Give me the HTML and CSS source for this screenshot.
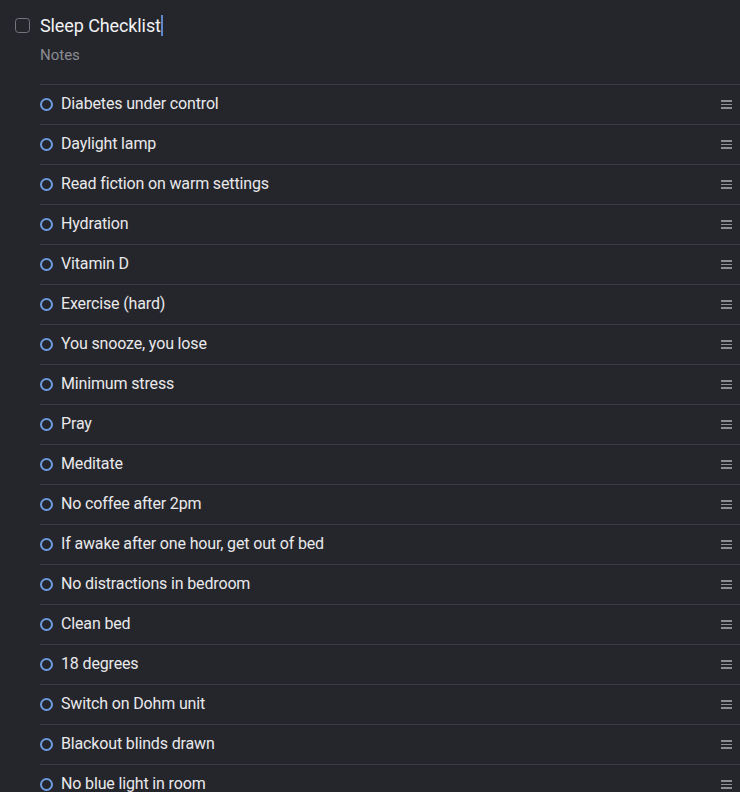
FILE: index.html
```html
<!DOCTYPE html>
<html>
<head>
<meta charset="utf-8">
<link rel="stylesheet" href="styles.css">
</head>
<body>
<div class="page">
  <div class="header">
    <span class="checkbox"></span>
    <span class="title">Sleep Checklist</span><span class="cursor"></span>
  </div>
  <div class="notes">Notes</div>
  <ul class="list">
    <li class="row"><span class="dot"></span><span class="label">Diabetes under control</span><span class="handle"><i></i><i></i><i></i></span></li>
    <li class="row"><span class="dot"></span><span class="label">Daylight lamp</span><span class="handle"><i></i><i></i><i></i></span></li>
    <li class="row"><span class="dot"></span><span class="label">Read fiction on warm settings</span><span class="handle"><i></i><i></i><i></i></span></li>
    <li class="row"><span class="dot"></span><span class="label">Hydration</span><span class="handle"><i></i><i></i><i></i></span></li>
    <li class="row"><span class="dot"></span><span class="label">Vitamin D</span><span class="handle"><i></i><i></i><i></i></span></li>
    <li class="row"><span class="dot"></span><span class="label">Exercise (hard)</span><span class="handle"><i></i><i></i><i></i></span></li>
    <li class="row"><span class="dot"></span><span class="label">You snooze, you lose</span><span class="handle"><i></i><i></i><i></i></span></li>
    <li class="row"><span class="dot"></span><span class="label">Minimum stress</span><span class="handle"><i></i><i></i><i></i></span></li>
    <li class="row"><span class="dot"></span><span class="label">Pray</span><span class="handle"><i></i><i></i><i></i></span></li>
    <li class="row"><span class="dot"></span><span class="label">Meditate</span><span class="handle"><i></i><i></i><i></i></span></li>
    <li class="row"><span class="dot"></span><span class="label">No coffee after 2pm</span><span class="handle"><i></i><i></i><i></i></span></li>
    <li class="row"><span class="dot"></span><span class="label">If awake after one hour, get out of bed</span><span class="handle"><i></i><i></i><i></i></span></li>
    <li class="row"><span class="dot"></span><span class="label">No distractions in bedroom</span><span class="handle"><i></i><i></i><i></i></span></li>
    <li class="row"><span class="dot"></span><span class="label">Clean bed</span><span class="handle"><i></i><i></i><i></i></span></li>
    <li class="row"><span class="dot"></span><span class="label">18 degrees</span><span class="handle"><i></i><i></i><i></i></span></li>
    <li class="row"><span class="dot"></span><span class="label">Switch on Dohm unit</span><span class="handle"><i></i><i></i><i></i></span></li>
    <li class="row"><span class="dot"></span><span class="label">Blackout blinds drawn</span><span class="handle"><i></i><i></i><i></i></span></li>
    <li class="row"><span class="dot"></span><span class="label">No blue light in room</span><span class="handle"><i></i><i></i><i></i></span></li>
  </ul>
</div>
</body>
</html>
```

FILE: styles.css
```css
html, body {
  margin: 0;
  padding: 0;
  background: #25262c;
  height: 100%;
  overflow: hidden;
}
.page {
  font-family: Roboto, "Noto Sans", sans-serif;
  color: #e9e9eb;
}
.header {
  display: flex;
  align-items: center;
  height: 30px;
  padding: 10px 0 0 15px;
}
.checkbox {
  width: 13px;
  height: 13px;
  border: 1.5px solid #74767d;
  border-radius: 3.5px;
  margin-right: 10px;
  flex: none;
}
.title {
  font-size: 18px;
  letter-spacing: -0.1px;
  color: #f2f2f4;
}
.cursor {
  display: inline-block;
  width: 2px;
  height: 21px;
  background: #5f86c9;
}
.notes {
  font-size: 15px;
  color: #8b8d93;
  padding-left: 40px;
  height: 30px;
  line-height: 31px;
}
.list {
  list-style: none;
  margin: 14px 0 0 40px;
  padding: 0;
}
.row {
  display: flex;
  align-items: center;
  height: 39px;
  border-top: 1px solid #3a3c43;
}
.dot {
  width: 9px;
  height: 9px;
  border: 2px solid #6d9be2;
  border-radius: 50%;
  margin-right: 8px;
  flex: none;
}
.label {
  font-size: 16px;
  letter-spacing: -0.15px;
  line-height: 20px;
  padding-bottom: 1px;
  flex: 1;
}
.handle {
  display: flex;
  flex-direction: column;
  gap: 2px;
  width: 11px;
  margin-right: 8px;
}
.handle i {
  display: block;
  height: 1.5px;
  background: #8c8e94;
}
```
